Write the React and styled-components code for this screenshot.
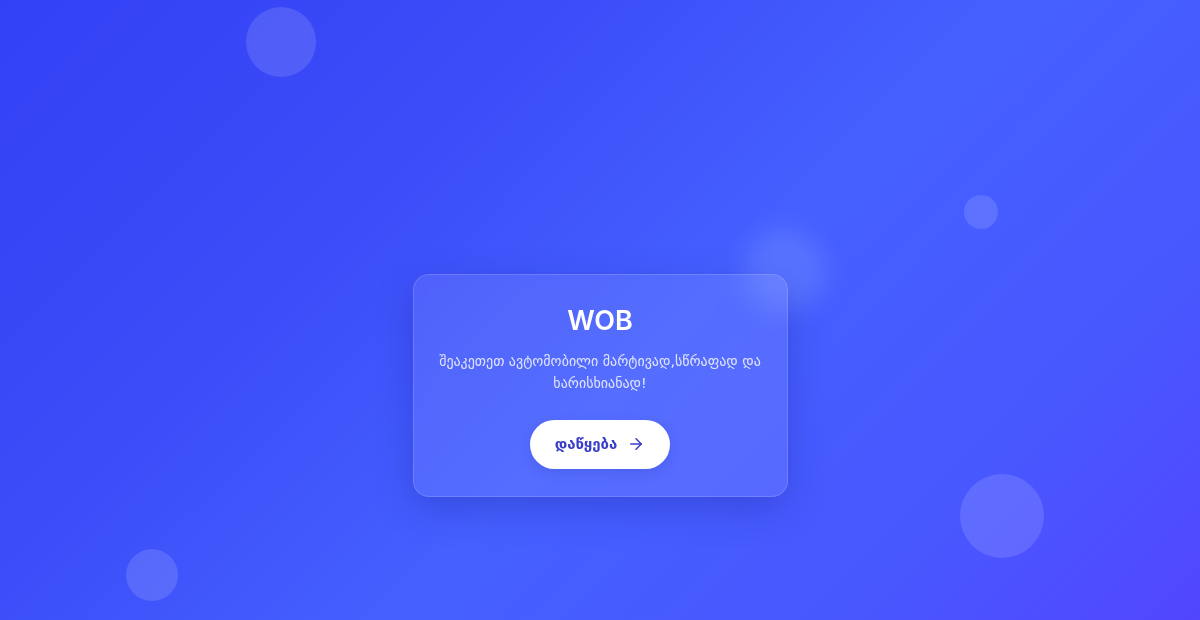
import React from 'react'
import styled, { createGlobalStyle } from 'styled-components'

const GlobalStyle = createGlobalStyle`
  html, body {
    margin: 0;
    padding: 0;
  }
  body {
    font-family: 'Inter', 'DejaVu Sans', sans-serif;
  }
`

const Page = styled.div`
  position: relative;
  overflow: hidden;
  width: 100%;
  height: 620px;
  box-sizing: border-box;
  padding-top: 150px;
  display: flex;
  align-items: center;
  justify-content: center;
  background: linear-gradient(135deg, #3341f5 0%, #3b4cf8 30%, #4560ff 55%, #4858ff 80%, #5246ff 100%);
`

const Bubble = styled.div`
  position: absolute;
  left: ${p => p.x - p.r}px;
  top: ${p => p.y - p.r}px;
  width: ${p => p.r * 2}px;
  height: ${p => p.r * 2}px;
  border-radius: 50%;
  background: rgba(255, 255, 255, 0.13);
`

const Glow = styled.div`
  position: absolute;
  left: 744px;
  top: 230px;
  width: 82px;
  height: 82px;
  border-radius: 50%;
  background: rgba(110, 140, 255, 0.45);
  filter: blur(12px);
`

const Card = styled.div`
  position: relative;
  width: 375px;
  box-sizing: border-box;
  padding: 29px 20px 27px;
  border-radius: 16px;
  background: rgba(255, 255, 255, 0.09);
  border: 1px solid rgba(255, 255, 255, 0.15);
  box-shadow: 0 12px 36px rgba(20, 30, 140, 0.28);
  backdrop-filter: blur(6px);
  display: flex;
  flex-direction: column;
  align-items: center;
  text-align: center;
  color: #fff;
`

const Title = styled.h1`
  margin: 0;
  font-family: 'Inter', 'Liberation Sans', sans-serif;
  font-size: 27px;
  font-weight: 600;
  line-height: 34px;
`

const Tagline = styled.p`
  margin: 12px 0 26px;
  font-family: 'DejaVu Sans', sans-serif;
  font-size: 14px;
  line-height: 22px;
  color: rgba(255, 255, 255, 0.82);
`

const StartButton = styled.button`
  display: flex;
  align-items: center;
  gap: 10px;
  height: 49px;
  padding: 0 25px;
  border: none;
  border-radius: 25px;
  background: #fff;
  color: #3a3fc9;
  font-family: 'DejaVu Sans', sans-serif;
  font-size: 15px;
  font-weight: 700;
  cursor: pointer;
  box-shadow: 0 4px 14px rgba(20, 30, 140, 0.15);
`

const Arrow = () => (
  <svg width="18" height="18" viewBox="0 0 24 24" fill="none" stroke="currentColor" strokeWidth="2" strokeLinecap="round" strokeLinejoin="round">
    <path d="M5 12h14" />
    <path d="M12 5l7 7-7 7" />
  </svg>
)

const bubbles = [
  { x: 281, y: 42, r: 35 },
  { x: 981, y: 212, r: 17 },
  { x: 1002, y: 516, r: 42 },
  { x: 152, y: 575, r: 26 }
]

export default function App () {
  return (
    <Page>
      <GlobalStyle />
      {bubbles.map((b, i) => <Bubble key={i} {...b} />)}
      <Glow />
      <Card>
        <Title>WOB</Title>
        <Tagline>შეაკეთეთ ავტომობილი მარტივად,სწრაფად და ხარისხიანად!</Tagline>
        <StartButton>
          დაწყება
          <Arrow />
        </StartButton>
      </Card>
    </Page>
  )
}
